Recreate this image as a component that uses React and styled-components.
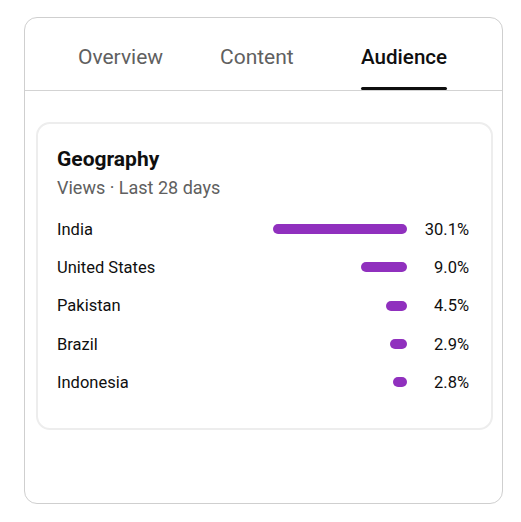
import React from 'react';
import styled, { createGlobalStyle } from 'styled-components';

const countries = [
    { name: 'India', pct: '30.1%', bar: 134 },
    { name: 'United States', pct: '9.0%', bar: 46 },
    { name: 'Pakistan', pct: '4.5%', bar: 21 },
    { name: 'Brazil', pct: '2.9%', bar: 17 },
    { name: 'Indonesia', pct: '2.8%', bar: 14 },
];

const tabs = ['Overview', 'Content', 'Audience'];

function App() {
    return (
        <>
            <GlobalStyle />
            <Page>
                <Card>
                    <TabList>
                        {tabs.map((t) => (
                            <Tab key={t} $active={t === 'Audience'}>
                                <span>{t}</span>
                            </Tab>
                        ))}
                    </TabList>
                    <Geo>
                        <Title>Geography</Title>
                        <Subtitle>Views · Last 28 days</Subtitle>
                        <Rows>
                            {countries.map((c) => (
                                <Row key={c.name}>
                                    <Name>{c.name}</Name>
                                    <Bar style={{ width: c.bar }} />
                                    <Pct>{c.pct}</Pct>
                                </Row>
                            ))}
                        </Rows>
                    </Geo>
                </Card>
            </Page>
        </>
    );
}

const GlobalStyle = createGlobalStyle`
body{
    margin: 0;
    background: #ffffff;
    font-family: Roboto, "Liberation Sans", sans-serif;
    color: #0f0f0f;
}
`;

const Page = styled.div`
padding: 17px 0 0 24px;
`;

const Card = styled.div`
width: 479px;
height: 487px;
box-sizing: border-box;
border: 1px solid #cfcfcf;
border-radius: 13px;
display: flex;
flex-direction: column;
`;

const TabList = styled.div`
display: grid;
grid-template-columns: 142px 141px auto;
padding-left: 53px;
border-bottom: 1px solid #d3d3d3;
`;

const Tab = styled.div`
justify-self: start;
position: relative;
height: 72px;
padding-top: 6px;
box-sizing: border-box;
display: flex;
align-items: center;
font-size: ${(p) => (p.$active ? '20.6px' : '21px')};
font-weight: ${(p) => (p.$active ? 500 : 400)};
color: ${(p) => (p.$active ? '#0f0f0f' : '#606060')};
&::after{
    content: '';
    display: ${(p) => (p.$active ? 'block' : 'none')};
    position: absolute;
    left: 0;
    right: 0;
    bottom: 0;
    height: 3px;
    border-radius: 2px;
    background: #0f0f0f;
}
`;

const Geo = styled.div`
margin: 31px 9px 0 11px;
padding: 23px 22px 27px 19px;
border: 2px solid #ededed;
border-radius: 14px;
`;

const Title = styled.div`
font-size: 21px;
font-weight: 700;
line-height: 24px;
`;

const Subtitle = styled.div`
margin-top: 7px;
font-size: 18px;
line-height: 20px;
color: #606060;
`;

const Rows = styled.div`
margin-top: 12px;
display: flex;
flex-direction: column;
`;

const Row = styled.div`
display: flex;
align-items: center;
height: 38.3px;
font-size: 16.5px;
`;

const Name = styled.div`
flex: 1;
`;

const Bar = styled.div`
height: 10px;
border-radius: 5px;
background: #9030be;
`;

const Pct = styled.div`
width: 62px;
text-align: right;
`;

export default App;
